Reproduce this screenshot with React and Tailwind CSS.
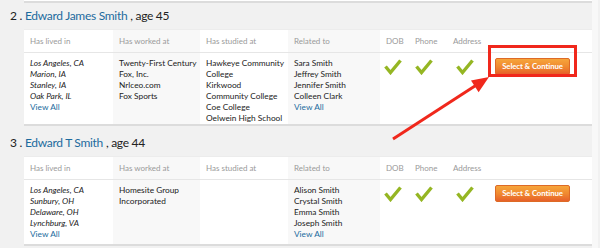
import React from 'react'

const people = [
  {
    n: 2, name: 'Edward James Smith', age: 45,
    lived: ['Los Angeles, CA', 'Marion, IA', 'Stanley, IA', 'Oak Park, IL'],
    worked: ['Twenty-First Century', 'Fox, Inc.', 'Nrlceo.com', 'Fox Sports'],
    studied: ['Hawkeye Community', 'College', 'Kirkwood', 'Community College', 'Coe College', 'Oelwein High School'],
    related: ['Sara Smith', 'Jeffrey Smith', 'Jennifer Smith', 'Colleen Clark'],
  },
  {
    n: 3, name: 'Edward T Smith', age: 44,
    lived: ['Los Angeles, CA', 'Sunbury, OH', 'Delaware, OH', 'Lynchburg, VA'],
    worked: ['Homesite Group', 'Incorporated'],
    studied: [],
    related: ['Alison Smith', 'Crystal Smith', 'Emma Smith', 'Joseph Smith'],
  },
]

function Check(){
  return (
    <svg width="18" height="16" viewBox="0 0 18 16" className="block">
      <path d="M1.5 7.5 L6.5 13.5 L16.5 1.5" fill="none" stroke="#95b623" strokeWidth="3.4" strokeLinecap="butt" strokeLinejoin="miter" />
    </svg>
  )
}

function Card({p}){
  const head = 'text-[8px] text-[#9a9a9a] pl-[6px] flex items-center whitespace-nowrap'
  return (
    <div>
      <div className="h-[26px] flex items-center pl-[10px] text-[12px] text-[#222] tracking-[-0.3px] whitespace-nowrap">
        <span>{p.n} .</span>
        <span className="ml-[3px] text-[#1d6b9e]">{p.name}</span>
        <span className="ml-[3px]">, age {p.age}</span>
      </div>
      <div className="ml-[24px] bg-white border-b-2 border-[#dcdcdc] text-[8.3px] leading-[11px] text-[#222] whitespace-nowrap">
        <div className="grid grid-cols-[89px_87px_88px_92px_29px_38px_40px_1fr] h-[24px] border-b border-[#e6e6e6] border-t border-t-[#ececec]">
          <div className={head}>Has lived in</div>
          <div className={head + ' bg-[#f8f8f8]'}>Has worked at</div>
          <div className={head}>Has studied at</div>
          <div className={head + ' bg-[#f8f8f8]'}>Related to</div>
          <div className={head}>DOB</div>
          <div className={head}>Phone</div>
          <div className={head}>Address</div>
          <div></div>
        </div>
        <div className="grid grid-cols-[89px_87px_88px_92px_29px_38px_40px_1fr]">
          <div className="pl-[6px] pt-[5px] pb-[4px] italic">
            {p.lived.map(t => <div key={t}>{t}</div>)}
            <div className="text-[#1d6b9e] not-italic">View All</div>
          </div>
          <div className="pl-[6px] pt-[5px] bg-[#f8f8f8]">
            {p.worked.map(t => <div key={t}>{t}</div>)}
          </div>
          <div className="pl-[6px] pt-[5px]">
            {p.studied.map(t => <div key={t}>{t}</div>)}
          </div>
          <div className="pl-[6px] pt-[5px] bg-[#f8f8f8]">
            {p.related.map(t => <div key={t}>{t}</div>)}
            <div className="text-[#1d6b9e]">View All</div>
          </div>
          <div className="pl-[4px] pt-[6px]"><Check /></div>
          <div className="pl-[6px] pt-[6px]"><Check /></div>
          <div className="pl-[9px] pt-[6px]"><Check /></div>
          <div className="pl-[8px] pt-[5px]">
            <button className="w-[75px] h-[17px] rounded-[2px] border border-[#dd6a26] bg-gradient-to-b from-[#f6a53b] via-[#f08a30] to-[#e6602a] text-white font-bold text-[7.8px] tracking-[-0.1px] leading-none">Select &amp; Continue</button>
          </div>
        </div>
      </div>
    </div>
  )
}

export default function App(){
  return (
    <div className="relative w-[600px] h-[248px] overflow-hidden bg-[#f1f1f1] font-['Lato',_'Liberation_Sans',_sans-serif] flex">
      <div className="w-[592px]">
        <div className="ml-[24px] h-[3px] bg-white border-b-2 border-[#dcdcdc]"></div>
        <Card p={people[0]} />
        <div className="h-[4px]"></div>
        <Card p={people[1]} />
      </div>
      <div className="w-[6px] bg-[#f8f8f8]"></div>

      <div className="absolute left-[488px] top-[45px] w-[89px] h-[32px] border-[3px] border-[#f0281c]"></div>
      <svg className="absolute left-0 top-0" width="600" height="248">
        <line x1="393" y1="139" x2="478" y2="84" stroke="#f0281c" strokeWidth="3" />
        <polygon points="489,77 478.6,92.2 471,80.4" fill="#f0281c" />
      </svg>
    </div>
  )
}
